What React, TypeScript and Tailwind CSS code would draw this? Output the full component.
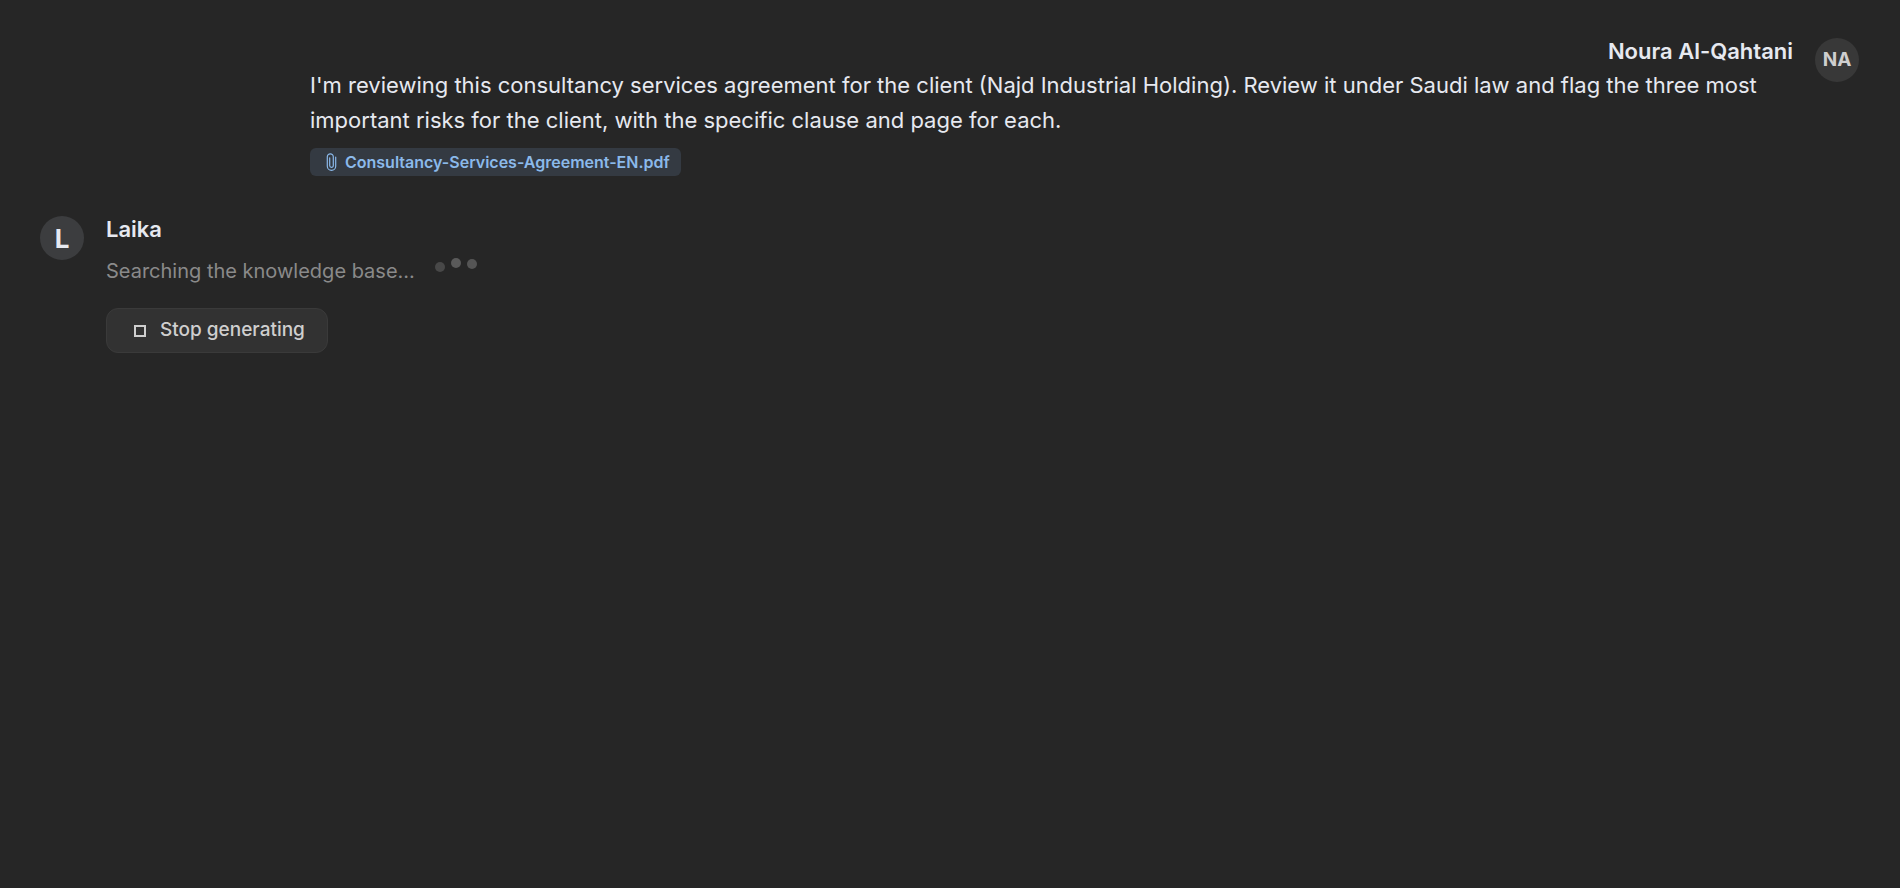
import React from 'react';
import clsx from 'clsx';

interface AvatarProps {
  label: string;
  className?: string;
}

const Avatar: React.FC<AvatarProps> = ({ label, className }) => (
  <div className={clsx('flex size-11 shrink-0 items-center justify-center rounded-full', className)}>{label}</div>
);

const PaperclipIcon: React.FC = () => (
  <svg width="11" height="18" viewBox="0 0 10 18" fill="none" stroke="currentColor" strokeWidth="1.2" strokeLinecap="round" aria-hidden="true">
    <path d="M9.2 4.2v9a4.2 4.2 0 0 1-8.4 0V3.8a3 3 0 0 1 6 0v8.8a1.8 1.8 0 0 1-3.6 0V4.8" />
  </svg>
);

const TypingDots: React.FC = () => (
  <div className="flex gap-1.5 pt-1" aria-hidden="true">
    <span className="mt-1 size-2.5 rounded-full bg-[#484848]" />
    <span className="size-2.5 rounded-full bg-[#5a5a5a]" />
    <span className="mt-px size-2.5 rounded-full bg-[#555555]" />
  </div>
);

const UserMessage: React.FC = () => (
  <div className="flex items-start justify-end gap-[22px]">
    <div className="min-w-0 max-w-[1483px] flex-1">
      <div className="text-right text-[22px] leading-[26px] font-semibold">Noura Al-Qahtani</div>
      <p className="mt-1 text-[22px] leading-[35px]">
        I'm reviewing this consultancy services agreement for the client (Najd Industrial Holding). Review it under Saudi law and flag the three most important risks for the client, with the specific clause and page for each.
      </p>
      <a href="#" className="mt-2.5 inline-flex h-7 items-center gap-2 rounded-md bg-[#343a42] pr-[11px] pl-4 text-base font-semibold text-[#8bb9ea]">
        <PaperclipIcon />
        Consultancy-Services-Agreement-EN.pdf
      </a>
    </div>
    <Avatar label="NA" className="bg-[#383838] text-[19px] font-bold text-[#cfcfcf]" />
  </div>
);

const AssistantMessage: React.FC = () => (
  <div className="flex items-start gap-[22px]">
    <Avatar label="L" className="bg-[#3c3d3f] text-[26px] font-bold" />
    <div className="min-w-0 flex-1">
      <div className="text-[22px] leading-[26px] font-semibold">Laika</div>
      <div className="mt-3 flex items-start gap-5 text-[#8a8a8a]">
        <span className="text-xl leading-[34px]">Searching the knowledge base...</span>
        <TypingDots />
      </div>
      <button type="button" className="mt-5 flex h-[45px] items-center gap-3.5 rounded-xl border border-[#3a3a3a] bg-[#323232] px-[27px] pr-[22px] text-[19px] font-medium text-[#cfcfcf]">
        <span className="size-3 border-2 border-current" />
        Stop generating
      </button>
    </div>
  </div>
);

export default function App() {
  return (
    <main className="flex min-h-screen flex-col gap-[39px] bg-[#262626] py-[38px] pr-[41px] pl-10 font-['Inter',sans-serif] text-[#e6e9f0]">
      <UserMessage />
      <AssistantMessage />
    </main>
  );
}
